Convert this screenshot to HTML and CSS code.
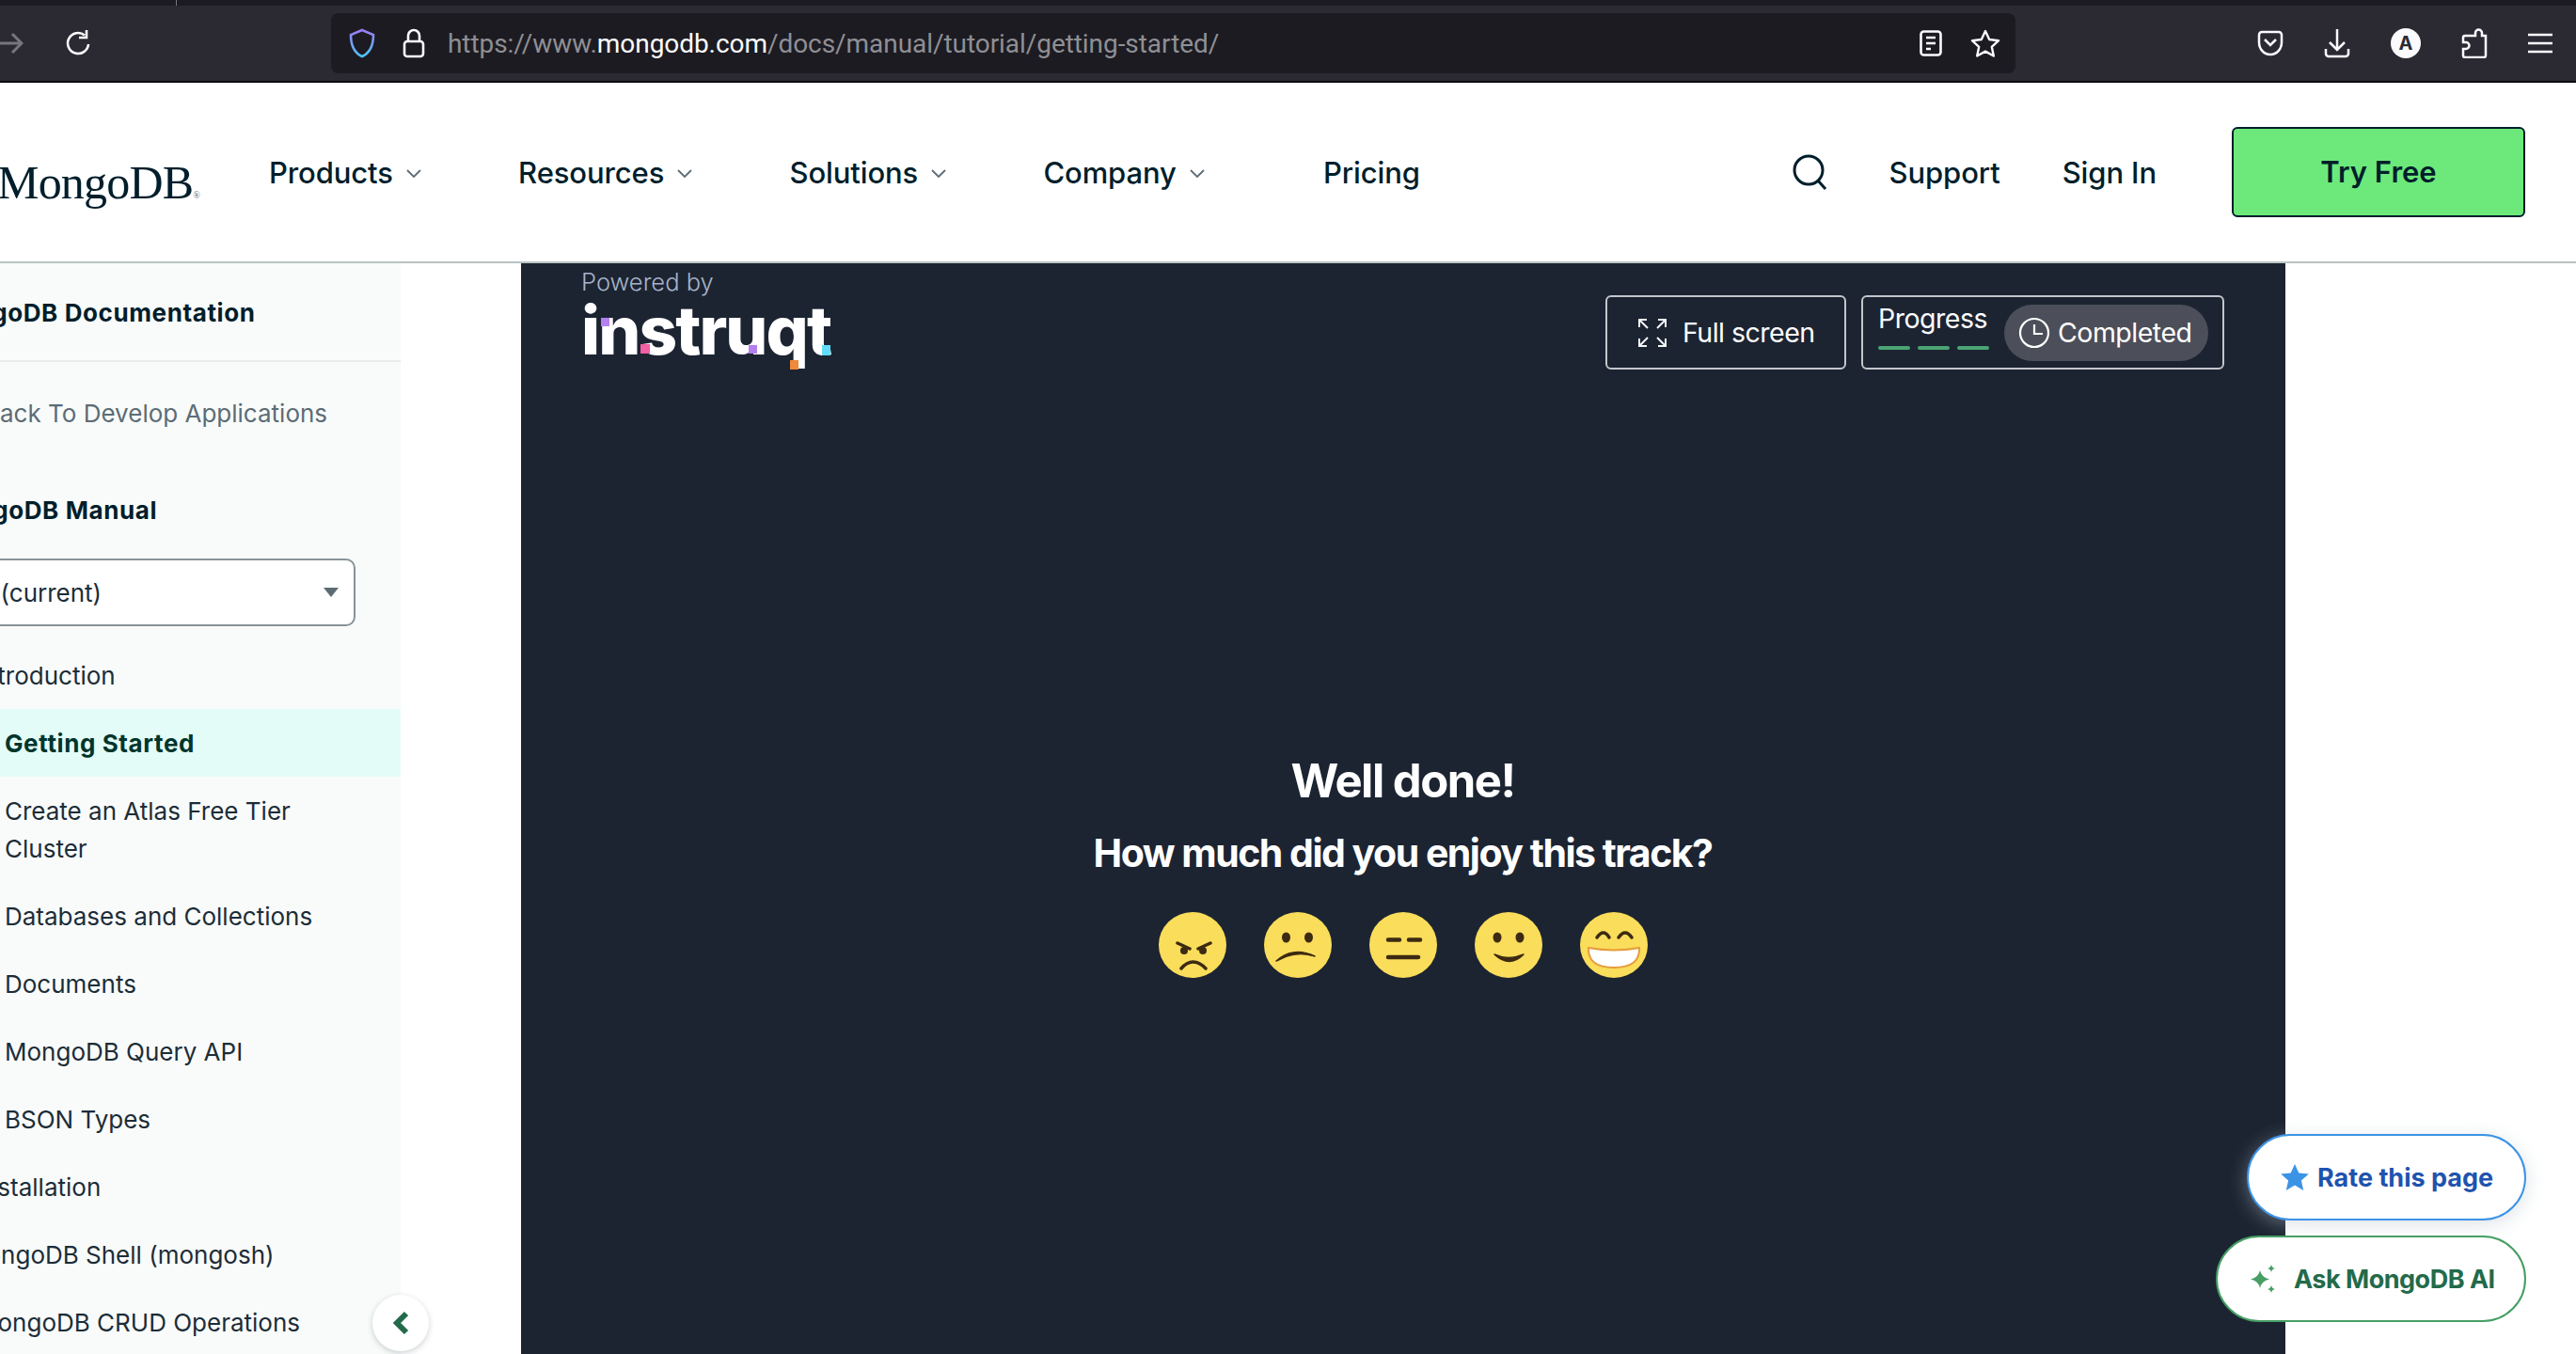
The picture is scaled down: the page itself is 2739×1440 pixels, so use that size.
FILE: index.html
```html
<!DOCTYPE html>
<html lang="en">
<head>
    <meta charset="UTF-8">
    <meta name="viewport" content="width=device-width, initial-scale=1.0">
    <title>MongoDB Getting Started</title>
    <link rel="stylesheet" href="styles.css">
</head>
<body>
    <!-- browser toolbar -->
    <div class="tabstrip"><span class="tabstrip-tick"></span></div>
    <div class="toolbar">
        <svg class="tool-icon back-arrow" width="26" height="30" viewBox="0 0 26 30"><path d="M0 15H23M14 5l10 10-10 10" fill="none" stroke="#77767d" stroke-width="3"/></svg>
        <svg class="tool-icon reload" width="32" height="32" viewBox="0 0 32 32"><path d="M26 17a11 11 0 1 1-4-9.5M24 2v8h-8" fill="none" stroke="#fbfbfe" stroke-width="2.6"/></svg>
        <div class="urlbar">
            <svg width="30" height="32" viewBox="0 0 30 32"><defs><linearGradient id="shieldGrad" x1="0" y1="0" x2="0" y2="1"><stop offset="0" stop-color="#9a7cf0"/><stop offset="1" stop-color="#4fc3f7"/></linearGradient></defs><path d="M15 2l12 5c0 11-3 19-12 23C6 26 3 18 3 7z" fill="none" stroke="url(#shieldGrad)" stroke-width="2.6"/></svg>
            <svg width="24" height="32" viewBox="0 0 24 32"><path d="M6 14V8a6 6 0 0 1 12 0v6" fill="none" stroke="#fbfbfe" stroke-width="2.6"/><rect x="2" y="14" width="20" height="16" rx="3" fill="none" stroke="#fbfbfe" stroke-width="2.6"/></svg>
            <div class="url"><span>https://www.</span><b>mongodb.com</b><span>/docs/manual/tutorial/getting-started/</span></div>
            <div class="urlbar-end">
                <svg width="24" height="28" viewBox="0 0 24 28"><rect x="1.5" y="1.5" width="21" height="25" rx="3" fill="none" stroke="#fbfbfe" stroke-width="2.6"/><path d="M7 8h10M7 14h10M7 20h5" stroke="#fbfbfe" stroke-width="2.6"/></svg>
                <svg width="32" height="30" viewBox="0 0 32 30"><path d="M16 2l4.2 9 9.8 1.2-7.2 6.6 2 9.7L16 23.600l-8.800 4.900 2-9.700L2 12.200 11.800 11z" fill="none" stroke="#fbfbfe" stroke-width="2.400" stroke-linejoin="round"/></svg>
            </div>
        </div>
        <div class="tool-right">
            <svg width="28" height="28" viewBox="0 0 28 28"><path d="M2 5a3 3 0 0 1 3-3h18a3 3 0 0 1 3 3v8c0 7-5 13-12 13S2 20 2 13z" fill="none" stroke="#fbfbfe" stroke-width="2.500"/><path d="M8 10l6 6 6-6" fill="none" stroke="#fbfbfe" stroke-width="2.500"/></svg>
            <svg width="28" height="32" viewBox="0 0 28 32"><path d="M14 1v22M6 15l8 8 8-8M2 22v5a3 3 0 0 0 3 3h18a3 3 0 0 0 3-3v-5" fill="none" stroke="#fbfbfe" stroke-width="2.500"/></svg>
            <div class="avatar">A</div>
            <svg width="28" height="32" viewBox="0 0 28 32"><path d="M11 8h4V5a3.500 3.500 0 0 1 7 0v3h4v21a2 2 0 0 1-2 2H4a2 2 0 0 1-2-2v-7h3a3.500 3.500 0 0 0 0-7H2V10a2 2 0 0 1 2-2z" fill="none" stroke="#fbfbfe" stroke-width="2.500"/></svg>
            <svg width="26" height="22" viewBox="0 0 26 22"><path d="M0 2h26M0 11h26M0 20h26" stroke="#fbfbfe" stroke-width="2.600"/></svg>
        </div>
    </div>

    <!-- site header -->
    <header class="site-header">
        <div class="logo">MongoDB<span class="logo-reg">®</span></div>
        <nav class="main-nav">
            <a class="nav-item">Products <svg class="caret" width="16" height="10" viewBox="0 0 16 10"><path d="M1 1l7 7 7-7" fill="none" stroke="#5c6c75" stroke-width="1.800"/></svg></a>
            <a class="nav-item">Resources <svg class="caret" width="16" height="10" viewBox="0 0 16 10"><path d="M1 1l7 7 7-7" fill="none" stroke="#5c6c75" stroke-width="1.800"/></svg></a>
            <a class="nav-item">Solutions <svg class="caret" width="16" height="10" viewBox="0 0 16 10"><path d="M1 1l7 7 7-7" fill="none" stroke="#5c6c75" stroke-width="1.800"/></svg></a>
            <a class="nav-item">Company <svg class="caret" width="16" height="10" viewBox="0 0 16 10"><path d="M1 1l7 7 7-7" fill="none" stroke="#5c6c75" stroke-width="1.800"/></svg></a>
            <a class="nav-item nav-pricing">Pricing</a>
        </nav>
        <div class="header-right">
            <svg class="search" width="42" height="38" viewBox="0 0 42 38"><circle cx="20" cy="17" r="15" fill="none" stroke="#001e2b" stroke-width="3"/><path d="M30 28l8 9" stroke="#001e2b" stroke-width="3"/></svg>
            <a class="nav-item support">Support</a>
            <a class="nav-item signin">Sign In</a>
            <a class="try-free">Try Free</a>
        </div>
    </header>

    <div class="main">
        <aside class="sidebar">
            <div class="side-head"><span class="cut-head">MongoDB Documentation</span></div>
            <div class="side-back"><span class="cut-back">Back To Develop Applications</span></div>
            <div class="side-manual"><span class="cut-manual">MongoDB Manual</span></div>
            <div class="version">
                <span class="cut-version">v7.0 (current)</span>
                <span class="version-arrow"></span>
            </div>
            <ul class="side-list">
                <li class="lvl1"><span class="cut-intro">Introduction</span></li>
                <li class="lvl2 active">Getting Started</li>
                <li class="lvl2">Create an Atlas Free Tier<br>Cluster</li>
                <li class="lvl2">Databases and Collections</li>
                <li class="lvl2">Documents</li>
                <li class="lvl2">MongoDB Query API</li>
                <li class="lvl2">BSON Types</li>
                <li class="lvl1"><span class="cut-install">Installation</span></li>
                <li class="lvl1"><span class="cut-shell">MongoDB Shell (mongosh)</span></li>
                <li class="lvl1"><span class="cut-crud">MongoDB CRUD Operations</span></li>
            </ul>
        </aside>

        <button class="collapse">
            <svg width="20" height="26" viewBox="0 0 20 26"><path d="M16 3L6 13l10 10" fill="none" stroke="#236a4a" stroke-width="6"/></svg>
        </button>

        <section class="panel">
            <div class="panel-top">
                <div class="brand">
                    <div class="powered">Powered by</div>
                    <div class="instruqt">instruqt
                        <span class="mark mark-purple1"></span>
                        <span class="mark mark-pink"></span>
                        <span class="mark mark-purple2"></span>
                        <span class="mark mark-cyan"></span>
                        <span class="mark mark-orange"></span>
                    </div>
                </div>
                <div class="panel-actions">
                    <div class="outline-box fullscreen">
                        <svg width="30" height="30" viewBox="0 0 30 30"><path d="M1 9V1h8M1 1l9 9M21 1h8v8M29 1l-9 9M1 21v8h8M1 29l9-9M29 21v8h-8M29 29l-9-9" fill="none" stroke="#f4f4f6" stroke-width="2"/></svg>
                        <span>Full screen</span>
                    </div>
                    <div class="outline-box progress">
                        <div class="progress-left">
                            <span class="progress-label">Progress</span>
                            <div class="dashes"><i></i><i></i><i></i></div>
                        </div>
                        <div class="pill">
                            <svg width="34" height="34" viewBox="0 0 34 34"><circle cx="17" cy="17" r="15" fill="none" stroke="#fff" stroke-width="2.200"/><path d="M17 8v10h9" fill="none" stroke="#fff" stroke-width="2.200"/></svg>
                            <span>Completed</span>
                        </div>
                    </div>
                </div>
            </div>

            <div class="feedback">
                <h2>Well done!</h2>
                <h3>How much did you enjoy this track?</h3>
                <div class="faces">
                    <svg class="face" width="72" height="70" viewBox="0 0 72 70"><ellipse cx="36" cy="35" rx="36" ry="35" fill="#fadd5a"/><circle cx="27" cy="41" r="4" fill="#3d2a12"/><circle cx="47" cy="41" r="4" fill="#3d2a12"/><path d="M20 33l13 6M55 33l-13 6M24 60q12-14 26 0" fill="none" stroke="#3d2a12" stroke-width="3.500" stroke-linecap="round"/></svg>
                    <svg class="face" width="72" height="70" viewBox="0 0 72 70"><ellipse cx="36" cy="35" rx="36" ry="35" fill="#fadd5a"/><ellipse cx="23.500" cy="27" rx="4.500" ry="5.500" fill="#3d2a12"/><ellipse cx="47.500" cy="27" rx="4.500" ry="5.500" fill="#3d2a12"/><path d="M13 52q18-16 41-5q-20-7-41 5z" fill="#3d2a12" stroke="#3d2a12" stroke-width="1.500" stroke-linejoin="round"/></svg>
                    <svg class="face" width="72" height="70" viewBox="0 0 72 70"><ellipse cx="36" cy="35" rx="36" ry="35" fill="#fadd5a"/><path d="M20 29.500h12M42 29.500h12M20 48h32" fill="none" stroke="#3d2a12" stroke-width="4.500" stroke-linecap="round"/></svg>
                    <svg class="face" width="72" height="70" viewBox="0 0 72 70"><ellipse cx="36" cy="35" rx="36" ry="35" fill="#fadd5a"/><ellipse cx="24" cy="27" rx="4.500" ry="5.500" fill="#3d2a12"/><ellipse cx="48" cy="27" rx="4.500" ry="5.500" fill="#3d2a12"/><path d="M21 45q15 7 31 0q-15 15-31 0z" fill="#3d2a12" stroke="#3d2a12" stroke-width="1.500" stroke-linejoin="round"/></svg>
                    <svg class="face" width="72" height="70" viewBox="0 0 72 70"><ellipse cx="36" cy="35" rx="36" ry="35" fill="#fadd5a"/><path d="M18 27q7-10 13 0M41 27q7-10 14 0" fill="none" stroke="#3d2a12" stroke-width="3.500" stroke-linecap="round"/><path d="M9 38q27 5 54 0q1 21-27 21T9 38z" fill="#fff" stroke="#e69c3c" stroke-width="2"/></svg>
                </div>
            </div>
        </section>
    </div>

    <a class="float-btn rate">
        <svg width="30" height="28" viewBox="0 0 30 28"><path d="M15 0l4.300 9.600 10.500 1-7.900 7 2.300 10.300L15 22.600l-9.200 5.300 2.300-10.300-7.900-7 10.500-1z" fill="#3b93e6"/></svg>
        <span>Rate this page</span>
    </a>
    <a class="float-btn ask">
        <svg width="30" height="30" viewBox="0 0 30 30"><path d="M11 6q1.500 7.500 10 9.500q-8.500 2-10 9.500q-1.500-7.500-10-9.500q8.500-2 10-9.500zM23 0q.8 3.300 4 4q-3.200.7-4 4q-.8-3.300-4-4q3.200-.7 4-4zM23 22q.8 3.300 4 4q-3.200.7-4 4q-.8-3.300-4-4q3.200-.7 4-4z" fill="#479f65"/></svg>
        <span>Ask MongoDB AI</span>
    </a>
</body>
</html>
```

FILE: styles.css
```css
html, body {
    margin: 0;
    padding: 0;
    height: 1440px;
    overflow: hidden;
}

body {
    position: relative;
    background-color: #fff;
    font-family: Inter, "Noto Sans", sans-serif;
    color: #001e2b;
}

/* browser chrome */
.tabstrip {
    height: 6px;
    background-color: #1c1b22;
    position: relative;
}

.tabstrip-tick {
    position: absolute;
    left: 187px;
    top: 0;
    width: 1px;
    height: 6px;
    background-color: #77767d;
}

.toolbar {
    height: 82px;
    box-sizing: border-box;
    background-color: #2b2a33;
    border-bottom: 2px solid #0c0c0d;
    display: flex;
    align-items: center;
}

.back-arrow {
    margin-left: -1px;
}

.reload {
    margin-left: 43px;
}

.urlbar {
    margin-left: 252px;
    width: 1791px;
    height: 64px;
    box-sizing: border-box;
    padding: 0 16px 0 18px;
    background-color: #1c1b22;
    border-radius: 8px;
    display: flex;
    align-items: center;
    gap: 28px;
}

.url {
    font-family: Roboto, sans-serif;
    font-size: 28px;
    letter-spacing: -0.06px;
    color: #8f8f94;
    margin-left: -4px;
    white-space: nowrap;
}

.url b {
    font-weight: 400;
    color: #fbfbfe;
}

.urlbar-end {
    margin-left: auto;
    display: flex;
    align-items: center;
    gap: 30px;
}

.tool-right {
    margin-left: 257px;
    display: flex;
    align-items: center;
    gap: 43px;
}

.avatar {
    width: 32px;
    height: 32px;
    border-radius: 50%;
    background-color: #fbfbfe;
    color: #2b2a33;
    font-size: 20px;
    font-weight: 700;
    line-height: 32px;
    text-align: center;
}

/* site header */
.site-header {
    height: 192px;
    box-sizing: border-box;
    border-bottom: 2px solid #b8c4c2;
    display: flex;
    align-items: center;
    position: relative;
}

.logo {
    font-family: "Liberation Serif", serif;
    font-size: 50px;
    letter-spacing: -0.8px;
    margin-left: -3px;
    width: 289px;
    color: #001e2b;
    position: relative;
    top: 11px;
    white-space: nowrap;
}

.logo-reg {
    font-size: 10px;
    color: #5c6c75;
}

.main-nav {
    display: flex;
    align-items: center;
    gap: 103px;
}

.nav-item {
    font-size: 31px;
    font-weight: 500;
    letter-spacing: -0.1px;
    color: #001e2b;
    white-space: nowrap;
}

.nav-pricing {
    margin-left: 23px;
}

.caret {
    margin-left: 6px;
    vertical-align: 5px;
}

.header-right {
    margin-left: auto;
    margin-right: 54px;
    display: flex;
    align-items: center;
}

.support {
    margin-left: 64px;
}

.signin {
    margin-left: 66px;
}

.try-free {
    margin-left: 80px;
    width: 312px;
    height: 96px;
    box-sizing: border-box;
    background-color: #6ce97a;
    border: 2px solid #001e2b;
    border-radius: 6px;
    font-size: 31px;
    font-weight: 600;
    line-height: 92px;
    text-align: center;
}

/* main area */
.main {
    height: 1160px;
    display: flex;
}

.sidebar {
    width: 426px;
    background-color: #f9fbfa;
    font-size: 26px;
    color: #1c2d38;
    overflow: hidden;
    white-space: nowrap;
}

.side-head {
    height: 103px;
    line-height: 106px;
    border-bottom: 2px solid #e8edeb;
    font-weight: 700;
    letter-spacing: 0.6px;
    color: #001e2b;
}

.side-back {
    height: 110px;
    line-height: 110px;
    color: #5c6c75;
}

.side-manual {
    height: 96px;
    line-height: 96px;
    font-weight: 700;
    letter-spacing: 0.6px;
    color: #001e2b;
}

.side-head span, .side-back span, .side-manual span,
.version span, .lvl1 span {
    display: inline-block;
}

.cut-head { margin-left: -67px; }
.cut-back { margin-left: -17px; }
.cut-manual { margin-left: -66px; }
.cut-version { margin-left: -58px; }
.cut-intro { margin-left: -25px; }
.cut-install { margin-left: -25px; }
.cut-shell { margin-left: -38px; }
.cut-crud { margin-left: -26px; }

.version {
    margin: 3px 48px 16px -10px;
    height: 72px;
    box-sizing: border-box;
    background-color: #fff;
    border: 2px solid #889397;
    border-radius: 10px;
    display: flex;
    align-items: center;
    justify-content: space-between;
    padding-right: 16px;
    padding-left: 10px;
}

.version .version-arrow {
    width: 0;
    height: 0;
    border-left: 8px solid transparent;
    border-right: 8px solid transparent;
    border-top: 10px solid #5c6c75;
}

.side-list {
    list-style: none;
    margin: 0;
    padding: 0;
}

.side-list li {
    padding: 17px 0 15px;
    line-height: 40px;
}

.lvl2 {
    padding-left: 5px !important;
}

.active {
    background-color: #e3fcf7;
    font-weight: 700;
    letter-spacing: 0.6px;
    color: #00352c;
}

.collapse {
    position: absolute;
    left: 396px;
    top: 1377px;
    width: 60px;
    height: 60px;
    padding: 0;
    background-color: #fff;
    border: 0;
    border-radius: 50%;
    box-shadow: 0 2px 6px rgba(0, 30, 43, 0.2);
    display: flex;
    align-items: center;
    justify-content: center;
}

/* instruqt panel */
.panel {
    margin-left: 128px;
    width: 1876px;
    box-sizing: border-box;
    padding: 0 65px 0 64px;
    background-color: #1c2432;
    color: #fff;
}

.panel-top {
    display: flex;
    justify-content: space-between;
}

.powered {
    font-size: 25.5px;
    font-weight: 300;
    color: #a7b3c8;
    line-height: 30px;
    margin-top: 5px;
}

.instruqt {
    position: relative;
    margin-top: 6px;
    font-size: 71px;
    font-weight: 800;
    line-height: 60px;
    width: 262px;
    white-space: nowrap;
    letter-spacing: -1.9px;
}

.mark {
    position: absolute;
}

.mark-purple1 { left: 21px; top: 17px; width: 9px; height: 9px; background-color: #b47fef; }
.mark-pink { left: 63px; top: 45px; width: 10px; height: 10px; background-color: #f25fa5; }
.mark-purple2 { left: 178px; top: 46px; width: 9px; height: 9px; background-color: #b47fef; }
.mark-cyan { left: 256px; top: 46px; width: 9px; height: 11px; background-color: #62dcfb; }
.mark-orange { left: 222px; top: 62px; width: 9px; height: 10px; background-color: #f0893a; }

.panel-actions {
    margin-top: 34px;
    display: flex;
    gap: 16px;
}

.outline-box {
    height: 79px;
    box-sizing: border-box;
    border: 2px solid #c4c6cb;
    border-radius: 6px;
    display: flex;
    align-items: center;
    font-size: 28.5px;
    letter-spacing: -0.5px;
}

.fullscreen {
    width: 256px;
    padding-left: 33px;
    gap: 17px;
}

.progress {
    width: 386px;
    padding: 0 15px 0 16px;
    justify-content: space-between;
}

.progress-left {
    align-self: flex-start;
    padding-top: 3px;
}

.progress-label {
    display: block;
    line-height: 40px;
}

.dashes {
    display: flex;
    gap: 8px;
    margin-top: 9px;
}

.dashes i {
    width: 34px;
    height: 4px;
    background-color: #4aa473;
    border-radius: 2px;
}

.pill {
    width: 217px;
    height: 60px;
    box-sizing: border-box;
    background-color: #4c4f59;
    border-radius: 30px;
    display: flex;
    align-items: center;
    padding-left: 15px;
    gap: 8px;
}

.feedback {
    margin-top: 408px;
    text-align: center;
}

.feedback h2 {
    margin: 0;
    font-size: 49px;
    font-weight: 700;
    line-height: 60px;
    letter-spacing: -1.5px;
}

.feedback h3 {
    margin: 16px 0 0;
    font-size: 41px;
    font-weight: 700;
    line-height: 60px;
    letter-spacing: -1.5px;
}

.faces {
    margin-top: 33px;
    display: flex;
    justify-content: center;
    gap: 40px;
}

/* floating buttons */
.float-btn {
    position: absolute;
    right: 53px;
    box-sizing: border-box;
    height: 92px;
    background-color: #fff;
    border-radius: 46px;
    display: flex;
    align-items: center;
    font-size: 27px;
    font-weight: 700;
    white-space: nowrap;
}

.rate {
    top: 1206px;
    width: 297px;
    padding-left: 34px;
    gap: 9px;
    border: 2px solid #3b93e6;
    color: #1f53ae;
    box-shadow: 0 4px 20px rgba(180, 190, 200, 0.45);
}

.ask {
    top: 1314px;
    width: 330px;
    padding-left: 34px;
    gap: 17px;
    letter-spacing: -0.5px;
    border: 2px solid #479f65;
    color: #236a4a;
}
```
